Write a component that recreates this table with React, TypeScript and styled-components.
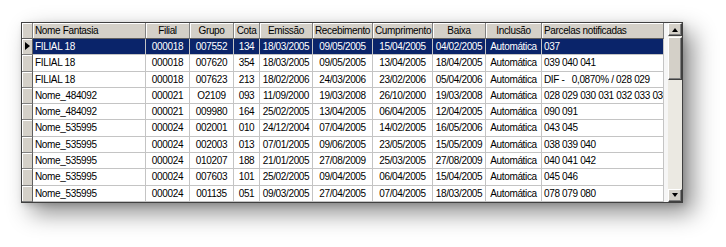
import styled, { createGlobalStyle } from 'styled-components';

const GlobalStyle = createGlobalStyle`
  html, body {
    margin: 0;
    padding: 0;
    background: #ffffff;
  }

  body {
    font-family: 'Liberation Sans', Arial, sans-serif;
  }
`;

type Align = 'left' | 'center';

const COLUMNS: { title: string; width: number; align: Align }[] = [
  { title: 'Nome Fantasia', width: 113, align: 'left' },
  { title: 'Filial', width: 44, align: 'center' },
  { title: 'Grupo', width: 44, align: 'center' },
  { title: 'Cota', width: 26, align: 'center' },
  { title: 'Emissão', width: 53, align: 'center' },
  { title: 'Recebimento', width: 60, align: 'center' },
  { title: 'Cumprimento', width: 60, align: 'center' },
  { title: 'Baixa', width: 53, align: 'center' },
  { title: 'Inclusão', width: 56, align: 'center' },
  { title: 'Parcelas notificadas', width: 122, align: 'left' },
];

const ROWS: string[][] = [
  ['FILIAL 18', '000018', '007552', '134', '18/03/2005', '09/05/2005', '15/04/2005', '04/02/2005', 'Automática', '037'],
  ['FILIAL 18', '000018', '007620', '354', '18/03/2005', '09/05/2005', '13/04/2005', '18/04/2005', 'Automática', '039 040 041'],
  ['FILIAL 18', '000018', '007623', '213', '18/02/2006', '24/03/2006', '23/02/2006', '05/04/2006', 'Automática', 'DIF -   0,0870% / 028 029'],
  ['Nome_484092', '000021', 'O2109', '093', '11/09/2000', '19/03/2008', '26/10/2000', '19/03/2008', 'Automática', '028 029 030 031 032 033 034'],
  ['Nome_484092', '000021', '009980', '164', '25/02/2005', '13/04/2005', '06/04/2005', '12/04/2005', 'Automática', '090 091'],
  ['Nome_535995', '000024', '002001', '010', '24/12/2004', '07/04/2005', '14/02/2005', '16/05/2006', 'Automática', '043 045'],
  ['Nome_535995', '000024', '002003', '013', '07/01/2005', '09/06/2005', '23/05/2005', '15/05/2009', 'Automática', '038 039 040'],
  ['Nome_535995', '000024', '010207', '188', '21/01/2005', '27/08/2009', '25/03/2005', '27/08/2009', 'Automática', '040 041 042'],
  ['Nome_535995', '000024', '007603', '101', '25/02/2005', '09/04/2005', '06/04/2005', '15/04/2005', 'Automática', '045 046'],
  ['Nome_535995', '000024', '001135', '051', '09/03/2005', '27/04/2005', '07/04/2005', '18/03/2005', 'Automática', '078 079 080'],
];

const TEMPLATE = ['11px', ...COLUMNS.map((c) => `${c.width}px`)].join(' ');

const App = () => {
  return (
    <Page>
      <GlobalStyle />
      <Frame>
        <GridArea>
          <HeaderRow>
            <IndicatorHeader />
            {COLUMNS.map((col) => (
              <HeaderCell key={col.title} $align={col.align}>
                {col.title}
              </HeaderCell>
            ))}
          </HeaderRow>
          {ROWS.map((row, idx) => (
            <DataRow key={row[2] + idx.toString()} $selected={idx === 0}>
              <IndicatorCell>{idx === 0 && <RowPointer />}</IndicatorCell>
              {row.map((value, cIdx) => (
                <Cell key={COLUMNS[cIdx].title} $align={COLUMNS[cIdx].align}>
                  {value}
                </Cell>
              ))}
            </DataRow>
          ))}
        </GridArea>
        <ScrollBar>
          <ScrollButton>
            <ArrowUp />
          </ScrollButton>
          <Thumb />
          <Track />
          <ScrollButton>
            <ArrowDown />
          </ScrollButton>
        </ScrollBar>
      </Frame>
    </Page>
  );
};

export default App;

const Page = styled.div`
  padding: 22px 0 0 21px;
  width: 726px;
  height: 247px;
  box-sizing: border-box;
`;

const Frame = styled.div`
  display: inline-flex;
  align-items: stretch;
  border: 1px solid #404040;
  background: #f6f6f6;
  box-shadow:
    10px 10px 22px rgba(0, 0, 0, 0.45),
    2px 2px 6px rgba(0, 0, 0, 0.15);
`;

const GridArea = styled.div`
  display: flex;
  flex-direction: column;
`;

const HeaderRow = styled.div`
  display: grid;
  grid-template-columns: ${TEMPLATE};
  height: 16px;
`;

const DataRow = styled.div<{ $selected: boolean }>`
  display: grid;
  grid-template-columns: ${TEMPLATE};
  height: 16.3px;
  background: ${({ $selected }) => ($selected ? '#0a246a' : '#ffffff')};
  color: ${({ $selected }) => ($selected ? '#ffffff' : '#000000')};
`;

const HeaderCell = styled.div<{ $align: Align }>`
  box-sizing: border-box;
  padding: 0 2px;
  overflow: hidden;
  white-space: nowrap;
  text-align: ${({ $align }) => $align};
  font-size: 10px;
  letter-spacing: -0.35px;
  line-height: 15px;
  color: #000;
  background: #d4d0c8;
  border-right: 1px solid #808080;
  border-bottom: 1px solid #606060;
  box-shadow: inset 1px 1px 0 #ffffff;
`;

const IndicatorHeader = styled.div`
  box-sizing: border-box;
  background: #d4d0c8;
  border-right: 1px solid #808080;
  border-bottom: 1px solid #606060;
  box-shadow: inset 1px 1px 0 #ffffff;
`;

const IndicatorCell = styled.div`
  box-sizing: border-box;
  position: relative;
  background: #d4d0c8;
  border-right: 1px solid #606060;
  border-bottom: 1px solid #808080;
  box-shadow: inset 1px 1px 0 #ffffff;
`;

const RowPointer = styled.span`
  position: absolute;
  left: 3px;
  top: 3px;
  width: 0;
  height: 0;
  border-top: 4.5px solid transparent;
  border-bottom: 4.5px solid transparent;
  border-left: 5px solid #000;
`;

const Cell = styled.div<{ $align: Align }>`
  box-sizing: border-box;
  padding: 0 2px;
  overflow: hidden;
  white-space: pre;
  text-align: ${({ $align }) => $align};
  font-size: 10px;
  letter-spacing: -0.35px;
  line-height: 15px;
  border-right: 1px solid #c4c4c4;
  border-bottom: 1px solid #c4c4c4;
`;

const ScrollBar = styled.div`
  display: flex;
  flex-direction: column;
  width: 14px;
  margin-left: 4px;
  background: #ebe9e2;
`;

const ScrollButton = styled.div`
  box-sizing: border-box;
  display: flex;
  align-items: center;
  justify-content: center;
  height: 13px;
  background: #d4d0c8;
  border-top: 1px solid #ffffff;
  border-left: 1px solid #ffffff;
  border-right: 1px solid #404040;
  border-bottom: 1px solid #404040;
  box-shadow: inset -1px -1px 0 #808080;
`;

const Thumb = styled.div`
  box-sizing: border-box;
  height: 43px;
  margin-top: 1px;
  background: #d4d0c8;
  border-top: 1px solid #ffffff;
  border-left: 1px solid #ffffff;
  border-right: 1px solid #404040;
  border-bottom: 1px solid #404040;
  box-shadow: inset -1px -1px 0 #808080;
`;

const Track = styled.div`
  flex: 1;
`;

const ArrowUp = styled.span`
  width: 0;
  height: 0;
  border-left: 3.5px solid transparent;
  border-right: 3.5px solid transparent;
  border-bottom: 4px solid #000;
`;

const ArrowDown = styled.span`
  width: 0;
  height: 0;
  border-left: 3.5px solid transparent;
  border-right: 3.5px solid transparent;
  border-top: 4px solid #000;
`;
